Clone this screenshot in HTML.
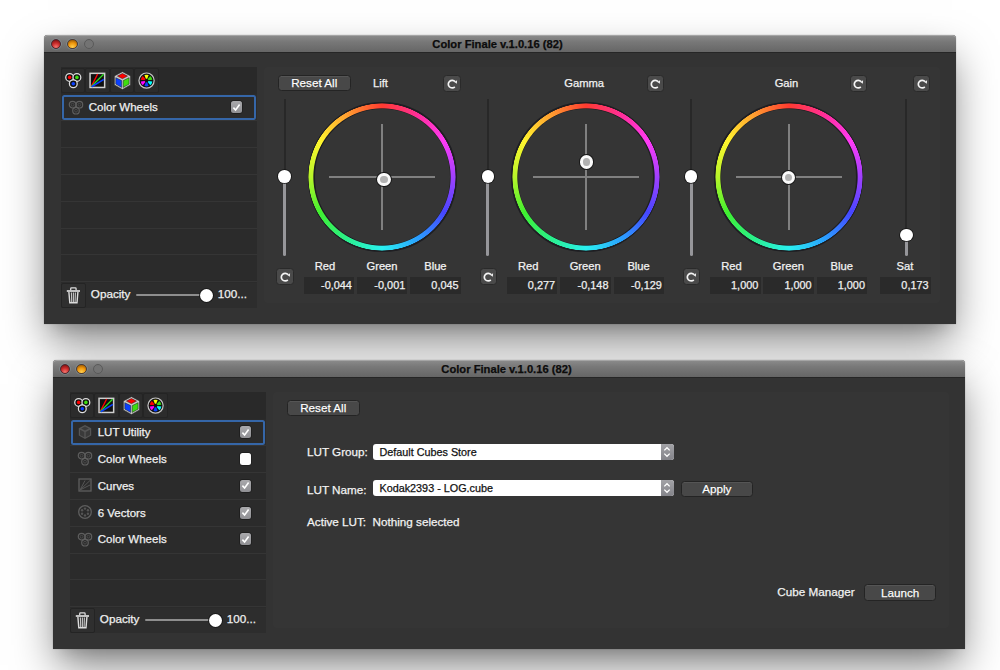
<!DOCTYPE html>
<html><head><meta charset="utf-8"><title>Color Finale</title>
<style>
html,body{margin:0;padding:0;background:#fff;}
body{width:1000px;height:670px;position:relative;overflow:hidden;font-family:"Liberation Sans",sans-serif;font-size:11px;color:#f0f0f0;-webkit-text-stroke:0.25px;}
.win{position:absolute;width:912px;height:289px;background:#333;border-radius:4px 4px 0 0;box-shadow:0 0 1px rgba(0,0,0,.5),0 20px 40px -4px rgba(0,0,0,.5),0 10px 14px -8px rgba(0,0,0,.13);}
.tbar{position:absolute;left:0;top:0;width:912px;height:18px;border-radius:4px 4px 0 0;background:linear-gradient(#8c8c8c,#787878 40%,#666);border-bottom:1px solid #262626;box-sizing:border-box;box-shadow:inset 0 1px 0 #a5a5a5;}
.tl{position:absolute;top:3.5px;width:10.6px;height:10.6px;border-radius:50%;box-sizing:border-box;}
.tl.r{left:6.6px;background:radial-gradient(circle at 50% 88%,#f57870,#cc2c2c 48%,#861414 85%);border:1px solid #4c2830;box-shadow:0 0 0 0.6px rgba(150,180,190,.55);}
.tl.y{left:23.05px;background:radial-gradient(circle at 50% 88%,#ffcf50,#f0980c 48%,#a05c04 85%);border:1px solid #4c3c38;box-shadow:0 0 0 0.6px rgba(150,180,190,.55);}
.tl.g{left:39.5px;background:#737373;border:1px solid #5a5a5a;}
.ttl{position:absolute;left:0;top:3px;width:907px;text-align:center;font-weight:bold;font-size:11.2px;line-height:13px;color:#0c0c0c;}
.lp{position:absolute;left:17px;top:32px;width:195.5px;height:241px;background:#2b2b2b;}
.tb{position:absolute;left:0;top:0;width:195.5px;height:27px;background:#292929;}
.tbb{position:absolute;top:0.5px;width:24.4px;height:25px;box-sizing:border-box;background:#2c2c2c;border:1px solid #242424;border-radius:2px;}
.tbb svg{position:absolute;left:-1px;top:-1px;}
.cb.on{background:linear-gradient(#a9a9ac,#909094);box-shadow:0 0 0 0.7px #1c1c1c;}
.cb.off{background:#fdfdfd;box-shadow:0 0 0 0.7px #1c1c1c;}
.cb svg{position:absolute;left:0.3px;top:0.6px;}
.bb{position:absolute;left:0;top:216px;width:195.5px;height:25px;background:#2d2d2d;}
.trash{position:absolute;left:0;top:0;width:24.5px;height:24.5px;box-sizing:border-box;border:1px solid #242424;background:#2f2f2f;border-radius:2px;}
.trash svg{position:absolute;left:-1px;top:-1px;}
.op{position:absolute;left:29.8px;top:4.2px;line-height:13px;font-size:11.7px;}
.htrk{position:absolute;left:74.5px;top:10.8px;width:68px;height:2.5px;background:#8e8e8e;border-radius:1.25px;}
.hthumb{position:absolute;left:139px;top:5.5px;width:13px;height:13px;border-radius:50%;background:#fff;box-shadow:0 0 0 0.8px #141414;}
.opv{position:absolute;left:156.8px;top:4.2px;line-height:13px;font-size:11.7px;}
.rp{position:absolute;left:219.5px;top:32px;width:676.5px;height:236px;background:#353535;border-radius:3px;}
.btn{position:absolute;height:16.4px;box-sizing:border-box;background:#484848;border:1px solid #242424;border-radius:3.5px;text-align:center;line-height:15.8px;font-size:11.7px;color:#fff;box-shadow:inset 0 1px 0 #555;text-shadow:0 0 1px rgba(0,0,0,.7);}
.lbl{position:absolute;line-height:13px;white-space:nowrap;font-size:11.7px;color:#f2f2f2;}
.rbtn{position:absolute;background:#4a4a4a;border-radius:3.5px;box-sizing:border-box;border:0.7px solid #2a2a2a;}
.rbtn svg{position:absolute;left:-0.4px;top:-0.1px;}
.vtrk{position:absolute;width:2.1px;background:#282828;}
.vtrk.lit{background:#96969a;width:3.2px;border-radius:0 0 1.5px 1.5px;}
.thumb{position:absolute;width:12.6px;height:12.6px;border-radius:50%;background:#fff;box-shadow:0 0 0 0.8px #141414;}
.wheel{position:absolute;width:148px;height:148px;border-radius:50%;background:conic-gradient(#ff3b30,#ff2e9a 30deg,#ff3bf5 60deg,#a040ff 90deg,#4646ff 120deg,#2aa0ff 150deg,#2af0f0 180deg,#2af08a 210deg,#40f030 240deg,#b8f52a 270deg,#fff52e 300deg,#ffa030 330deg,#ff3b30);-webkit-mask:radial-gradient(circle,transparent 68.2px,#000 69.1px,#000 73.2px,transparent 73.9px);mask:radial-gradient(circle,transparent 68.2px,#000 69.1px,#000 73.2px,transparent 73.9px);}
.chh{position:absolute;width:106.4px;height:2px;background:#808080;}
.chv{position:absolute;width:2px;height:106.4px;background:#808080;}
.knob{position:absolute;width:13.4px;height:13.4px;border-radius:50%;box-sizing:border-box;background:#b2b2b2;border:3px solid #fafafa;box-shadow:0 0 0 0.9px #161616;}
.fld{position:absolute;height:17px;box-sizing:border-box;background:#2a2a2a;text-align:right;padding-right:2.2px;line-height:16px;font-size:10.9px;color:#f0f0f0;}
.dd{position:absolute;height:16px;box-sizing:border-box;background:#fff;border-radius:3px;color:#111;font-size:10.8px;line-height:16px;}
.dd span{position:absolute;left:7px;top:0;white-space:nowrap;}
.dd b{position:absolute;right:0;top:0;width:12.5px;height:16px;background:linear-gradient(#a2a2a6,#84848a);border-radius:0 3px 3px 0;box-sizing:border-box;}
.dd b svg{position:absolute;left:0.3px;top:0;}
.l1{font-size:11.2px;}
.row{position:absolute;left:0;width:195.5px;height:26.8px;}
.row.sel::after{content:"";position:absolute;left:0.5px;top:1.2px;width:194.5px;height:25px;box-sizing:border-box;border:2px solid #3566a8;border-radius:2.5px;}
.row .ri{position:absolute;left:6.2px;top:3.7px;}
.row .rn{position:absolute;left:27.7px;top:7.2px;line-height:13px;white-space:nowrap;font-size:11.5px;}
.cb{position:absolute;left:169.9px;top:7.3px;width:11.5px;height:12px;border-radius:2.5px;}
.wring{position:absolute;width:149.2px;height:149.2px;box-sizing:border-box;border-radius:50%;border:7px solid #1e1e22;}
.rowline{position:absolute;left:0;width:195.5px;height:1px;background:#353535;margin-top:-0.5px;}
</style></head>
<body>
<div class="win" style="left:44px;top:35px"><div class="tbar"><i class="tl r"></i><i class="tl y"></i><i class="tl g"></i><div class="ttl">Color Finale v.1.0.16 (82)</div></div><div class="lp"><div class="tb"><div class="tbb" style="left:0.0px"><svg width="25" height="25" viewBox="0 0 25 25"><g stroke="#e0e0e0" stroke-width="1.25" fill="#101010"><circle cx="8.65" cy="9.4" r="3.9"/><circle cx="15.9" cy="9.4" r="3.9"/><circle cx="12.3" cy="15.8" r="3.9"/></g><circle cx="8.65" cy="9.4" r="1.8" fill="#f00"/><circle cx="15.9" cy="9.4" r="1.8" fill="#3ddc10"/><circle cx="12.3" cy="15.8" r="1.8" fill="#0a40ff"/></svg></div><div class="tbb" style="left:24.4px"><svg width="25" height="25" viewBox="0 0 25 25"><rect x="5.05" y="5.35" width="14.6" height="14.1" fill="#101010" stroke="#cfcfcf" stroke-width="1.5"/><path d="M6.2 18.6 L12.6 6.1" stroke="#f00" stroke-width="1.25"/><path d="M6.2 18.6 L18.6 6.3" stroke="#2fe020" stroke-width="1.3"/><path d="M6.6 18.7 L18.9 11.4" stroke="#0a40ff" stroke-width="1.6"/></svg></div><div class="tbb" style="left:48.8px"><svg width="25" height="25" viewBox="0 0 25 25"><path d="M12.45 3.7 L20.5 7.9 L20.5 16.9 L12.45 21.5 L4.4 16.9 L4.4 7.9 Z" fill="#c9c9c9" stroke="#222" stroke-width="0.5"/><g stroke="#1a1a1a" stroke-width="0.5"><path d="M12.45 5.5 L17.5 8.1 L12.45 10.7 L7.4 8.1 Z" fill="#f00"/><path d="M5.8 9.7 L11.65 12.6 L11.65 19.4 L5.8 16.1 Z" fill="#0a40ff"/><path d="M19.1 9.7 L13.25 12.6 L13.25 19.4 L19.1 16.1 Z" fill="#3ddc10"/></g></svg></div><div class="tbb" style="left:73.2px"><svg width="25" height="25" viewBox="0 0 25 25"><circle cx="12.55" cy="12.6" r="7.6" fill="#101010" stroke="#c6c6c6" stroke-width="1.2"/><path d="M11.87 10.83 L10.44 7.09 A5.9 5.9 0 0 1 14.66 7.09 L13.23 10.83 Z" fill="#ff0"/><path d="M13.75 11.12 L16.26 8.01 A5.9 5.9 0 0 1 18.38 11.68 L14.43 12.30 Z" fill="#3ddc10"/><path d="M14.43 12.90 L18.38 13.52 A5.9 5.9 0 0 1 16.26 17.19 L13.75 14.08 Z" fill="#0ff"/><path d="M13.23 14.37 L14.66 18.11 A5.9 5.9 0 0 1 10.44 18.11 L11.87 14.37 Z" fill="#0a40ff"/><path d="M11.35 14.08 L8.84 17.19 A5.9 5.9 0 0 1 6.72 13.52 L10.67 12.90 Z" fill="#f0f"/><path d="M10.67 12.30 L6.72 11.68 A5.9 5.9 0 0 1 8.84 8.01 L11.35 11.12 Z" fill="#f00"/></svg></div></div><div class="rowline" style="top:53.8px"></div><div class="rowline" style="top:80.6px"></div><div class="rowline" style="top:107.4px"></div><div class="rowline" style="top:134.2px"></div><div class="rowline" style="top:161.0px"></div><div class="rowline" style="top:187.8px"></div><div class="rowline" style="top:214.6px"></div><div class="row sel" style="top:27.0px"><span class="ri"><svg width="18" height="18" viewBox="0 0 18 18"><g stroke="#5e5e5e" stroke-width="1.2" fill="none"><circle cx="5.6" cy="6.7" r="3.3"/><circle cx="12.4" cy="6.7" r="3.3"/><circle cx="9" cy="12.7" r="3.3"/><g stroke="#4c4c4c" stroke-width="0.9"><circle cx="5.6" cy="6.7" r="1.4"/><circle cx="12.4" cy="6.7" r="1.4"/><circle cx="9" cy="12.7" r="1.4"/></g></g></svg></span><span class="rn">Color Wheels</span><div class="cb on"><svg width="11" height="11" viewBox="0 0 11 11"><path d="M2.4 5.6 L4.6 8 L8.6 2.6" fill="none" stroke="#fff" stroke-width="1.6"/></svg></div></div><div class="bb"><div class="trash"><svg width="25" height="25" viewBox="0 0 25 25"><g fill="none" stroke="#dcdcdc"><path d="M5.8 8 H19" stroke-width="1.7"/><path d="M9.7 7.2 V5.7 Q9.7 4.9 10.5 4.9 H14.3 Q15.1 4.9 15.1 5.7 V7.2" stroke-width="1.3"/><path d="M7.9 9 L8.8 19.7 H16 L16.9 9" stroke-width="1.4"/><path d="M10.4 9.4 L10.7 19 M12.4 9.4 V19 M14.4 9.4 L14.1 19" stroke-width="1.1" stroke="#c4c4c4"/></g></svg></div><div class="op">Opacity</div><div class="htrk"></div><div class="hthumb"></div><div class="opv">100...</div></div></div><div class="rp"><div class="btn" style="left:14.3px;top:7.7px;width:72.8px;line-height:14.2px">Reset All</div><div class="vtrk" style="left:20.10px;top:31.5px;height:78.50px"></div><div class="vtrk lit" style="left:19.60px;top:110.00px;height:79.00px"></div><div class="thumb" style="left:14.90px;top:103.10px"></div><div class="lbl l1" style="left:67.0px;top:9.6px;width:100px;text-align:center">Lift</div><div class="rbtn" style="left:179.90px;top:8.2px;width:17.6px;height:16.6px"><svg width="17" height="16" viewBox="0 0 17 16"><path d="M11.0 5.65 A3.8 3.8 0 1 0 10.8 10.8" fill="none" stroke="#f4f4f4" stroke-width="1.7"/><path d="M13.1 4.2 L10.3 5.9 L12.8 7.7 Z" fill="#f4f4f4"/></svg></div><div class="wring" style="left:44.10px;top:35.45px"></div><div class="wheel" style="left:44.70px;top:36.05px"></div><div class="chh" style="left:65.50px;top:109.05px"></div><div class="chv" style="left:117.70px;top:56.85px"></div><div class="knob" style="left:113.70px;top:105.90px"></div><div class="rbtn" style="left:12.90px;top:201.2px;width:17.6px;height:16.6px"><svg width="17" height="16" viewBox="0 0 17 16"><path d="M11.0 5.65 A3.8 3.8 0 1 0 10.8 10.8" fill="none" stroke="#f4f4f4" stroke-width="1.7"/><path d="M13.1 4.2 L10.3 5.9 L12.8 7.7 Z" fill="#f4f4f4"/></svg></div><div class="lbl l1" style="left:11.5px;top:192.5px;width:100px;text-align:center">Red</div><div class="fld" style="left:40.1px;top:210px;width:50.5px">-0,044</div><div class="lbl l1" style="left:68.5px;top:192.5px;width:100px;text-align:center">Green</div><div class="fld" style="left:93.45px;top:210px;width:50.5px">-0,001</div><div class="lbl l1" style="left:121.9px;top:192.5px;width:100px;text-align:center">Blue</div><div class="fld" style="left:146.8px;top:210px;width:50.5px">0,045</div><div class="vtrk" style="left:223.30px;top:31.5px;height:78.50px"></div><div class="vtrk lit" style="left:222.80px;top:110.00px;height:79.00px"></div><div class="thumb" style="left:218.10px;top:103.10px"></div><div class="lbl l1" style="left:270.7px;top:9.6px;width:100px;text-align:center">Gamma</div><div class="rbtn" style="left:383.10px;top:8.2px;width:17.6px;height:16.6px"><svg width="17" height="16" viewBox="0 0 17 16"><path d="M11.0 5.65 A3.8 3.8 0 1 0 10.8 10.8" fill="none" stroke="#f4f4f4" stroke-width="1.7"/><path d="M13.1 4.2 L10.3 5.9 L12.8 7.7 Z" fill="#f4f4f4"/></svg></div><div class="wring" style="left:247.60px;top:35.45px"></div><div class="wheel" style="left:248.20px;top:36.05px"></div><div class="chh" style="left:269.00px;top:109.05px"></div><div class="chv" style="left:321.20px;top:56.85px"></div><div class="knob" style="left:316.25px;top:88.45px"></div><div class="rbtn" style="left:216.10px;top:201.2px;width:17.6px;height:16.6px"><svg width="17" height="16" viewBox="0 0 17 16"><path d="M11.0 5.65 A3.8 3.8 0 1 0 10.8 10.8" fill="none" stroke="#f4f4f4" stroke-width="1.7"/><path d="M13.1 4.2 L10.3 5.9 L12.8 7.7 Z" fill="#f4f4f4"/></svg></div><div class="lbl l1" style="left:214.7px;top:192.5px;width:100px;text-align:center">Red</div><div class="fld" style="left:243.3px;top:210px;width:50.5px">0,277</div><div class="lbl l1" style="left:271.7px;top:192.5px;width:100px;text-align:center">Green</div><div class="fld" style="left:296.65px;top:210px;width:50.5px">-0,148</div><div class="lbl l1" style="left:325.1px;top:192.5px;width:100px;text-align:center">Blue</div><div class="fld" style="left:350.0px;top:210px;width:50.5px">-0,129</div><div class="vtrk" style="left:426.50px;top:31.5px;height:78.50px"></div><div class="vtrk lit" style="left:426.00px;top:110.00px;height:79.00px"></div><div class="thumb" style="left:421.30px;top:103.10px"></div><div class="lbl l1" style="left:473.0px;top:9.6px;width:100px;text-align:center">Gain</div><div class="rbtn" style="left:586.30px;top:8.2px;width:17.6px;height:16.6px"><svg width="17" height="16" viewBox="0 0 17 16"><path d="M11.0 5.65 A3.8 3.8 0 1 0 10.8 10.8" fill="none" stroke="#f4f4f4" stroke-width="1.7"/><path d="M13.1 4.2 L10.3 5.9 L12.8 7.7 Z" fill="#f4f4f4"/></svg></div><div class="wring" style="left:450.80px;top:35.45px"></div><div class="wheel" style="left:451.40px;top:36.05px"></div><div class="chh" style="left:472.20px;top:109.05px"></div><div class="chv" style="left:524.40px;top:56.85px"></div><div class="knob" style="left:518.50px;top:103.50px"></div><div class="rbtn" style="left:419.30px;top:201.2px;width:17.6px;height:16.6px"><svg width="17" height="16" viewBox="0 0 17 16"><path d="M11.0 5.65 A3.8 3.8 0 1 0 10.8 10.8" fill="none" stroke="#f4f4f4" stroke-width="1.7"/><path d="M13.1 4.2 L10.3 5.9 L12.8 7.7 Z" fill="#f4f4f4"/></svg></div><div class="lbl l1" style="left:417.9px;top:192.5px;width:100px;text-align:center">Red</div><div class="fld" style="left:446.5px;top:210px;width:50.5px">1,000</div><div class="lbl l1" style="left:474.9px;top:192.5px;width:100px;text-align:center">Green</div><div class="fld" style="left:499.85px;top:210px;width:50.5px">1,000</div><div class="lbl l1" style="left:528.3px;top:192.5px;width:100px;text-align:center">Blue</div><div class="fld" style="left:553.2px;top:210px;width:50.5px">1,000</div><div class="vtrk" style="left:641.70px;top:31.5px;height:137.10px"></div><div class="vtrk lit" style="left:641.20px;top:168.60px;height:20.40px"></div><div class="thumb" style="left:636.50px;top:161.70px"></div><div class="rbtn" style="left:649.40px;top:8.2px;width:17.6px;height:16.6px"><svg width="17" height="16" viewBox="0 0 17 16"><path d="M11.0 5.65 A3.8 3.8 0 1 0 10.8 10.8" fill="none" stroke="#f4f4f4" stroke-width="1.7"/><path d="M13.1 4.2 L10.3 5.9 L12.8 7.7 Z" fill="#f4f4f4"/></svg></div><div class="lbl l1" style="left:591.5px;top:192.5px;width:100px;text-align:center">Sat</div><div class="fld" style="left:616.8px;top:210px;width:50.5px">0,173</div></div></div>
<div class="win" style="left:53px;top:360px"><div class="tbar"><i class="tl r"></i><i class="tl y"></i><i class="tl g"></i><div class="ttl">Color Finale v.1.0.16 (82)</div></div><div class="lp"><div class="tb"><div class="tbb" style="left:0.0px"><svg width="25" height="25" viewBox="0 0 25 25"><g stroke="#e0e0e0" stroke-width="1.25" fill="#101010"><circle cx="8.65" cy="9.4" r="3.9"/><circle cx="15.9" cy="9.4" r="3.9"/><circle cx="12.3" cy="15.8" r="3.9"/></g><circle cx="8.65" cy="9.4" r="1.8" fill="#f00"/><circle cx="15.9" cy="9.4" r="1.8" fill="#3ddc10"/><circle cx="12.3" cy="15.8" r="1.8" fill="#0a40ff"/></svg></div><div class="tbb" style="left:24.4px"><svg width="25" height="25" viewBox="0 0 25 25"><rect x="5.05" y="5.35" width="14.6" height="14.1" fill="#101010" stroke="#cfcfcf" stroke-width="1.5"/><path d="M6.2 18.6 L12.6 6.1" stroke="#f00" stroke-width="1.25"/><path d="M6.2 18.6 L18.6 6.3" stroke="#2fe020" stroke-width="1.3"/><path d="M6.6 18.7 L18.9 11.4" stroke="#0a40ff" stroke-width="1.6"/></svg></div><div class="tbb" style="left:48.8px"><svg width="25" height="25" viewBox="0 0 25 25"><path d="M12.45 3.7 L20.5 7.9 L20.5 16.9 L12.45 21.5 L4.4 16.9 L4.4 7.9 Z" fill="#c9c9c9" stroke="#222" stroke-width="0.5"/><g stroke="#1a1a1a" stroke-width="0.5"><path d="M12.45 5.5 L17.5 8.1 L12.45 10.7 L7.4 8.1 Z" fill="#f00"/><path d="M5.8 9.7 L11.65 12.6 L11.65 19.4 L5.8 16.1 Z" fill="#0a40ff"/><path d="M19.1 9.7 L13.25 12.6 L13.25 19.4 L19.1 16.1 Z" fill="#3ddc10"/></g></svg></div><div class="tbb" style="left:73.2px"><svg width="25" height="25" viewBox="0 0 25 25"><circle cx="12.55" cy="12.6" r="7.6" fill="#101010" stroke="#c6c6c6" stroke-width="1.2"/><path d="M11.87 10.83 L10.44 7.09 A5.9 5.9 0 0 1 14.66 7.09 L13.23 10.83 Z" fill="#ff0"/><path d="M13.75 11.12 L16.26 8.01 A5.9 5.9 0 0 1 18.38 11.68 L14.43 12.30 Z" fill="#3ddc10"/><path d="M14.43 12.90 L18.38 13.52 A5.9 5.9 0 0 1 16.26 17.19 L13.75 14.08 Z" fill="#0ff"/><path d="M13.23 14.37 L14.66 18.11 A5.9 5.9 0 0 1 10.44 18.11 L11.87 14.37 Z" fill="#0a40ff"/><path d="M11.35 14.08 L8.84 17.19 A5.9 5.9 0 0 1 6.72 13.52 L10.67 12.90 Z" fill="#f0f"/><path d="M10.67 12.30 L6.72 11.68 A5.9 5.9 0 0 1 8.84 8.01 L11.35 11.12 Z" fill="#f00"/></svg></div></div><div class="rowline" style="top:53.8px"></div><div class="rowline" style="top:80.6px"></div><div class="rowline" style="top:107.4px"></div><div class="rowline" style="top:134.2px"></div><div class="rowline" style="top:161.0px"></div><div class="rowline" style="top:187.8px"></div><div class="rowline" style="top:214.6px"></div><div class="row sel" style="top:27.0px"><span class="ri"><svg width="18" height="18" viewBox="0 0 18 18"><path d="M9 2 L15.2 5.2 L15.2 12.6 L9 16 L2.8 12.6 L2.8 5.2 Z" fill="#555"/><path d="M9 3.4 L12.9 5.4 L9 7.4 L5.1 5.4 Z M4 6.8 L8.3 9 L8.3 14.2 L4 11.9 Z M14 6.8 L9.7 9 L9.7 14.2 L14 11.9 Z" fill="#3a3a3a"/></svg></span><span class="rn">LUT Utility</span><div class="cb on"><svg width="11" height="11" viewBox="0 0 11 11"><path d="M2.4 5.6 L4.6 8 L8.6 2.6" fill="none" stroke="#fff" stroke-width="1.6"/></svg></div></div><div class="row" style="top:53.8px"><span class="ri"><svg width="18" height="18" viewBox="0 0 18 18"><g stroke="#5e5e5e" stroke-width="1.2" fill="none"><circle cx="5.6" cy="6.7" r="3.3"/><circle cx="12.4" cy="6.7" r="3.3"/><circle cx="9" cy="12.7" r="3.3"/><g stroke="#4c4c4c" stroke-width="0.9"><circle cx="5.6" cy="6.7" r="1.4"/><circle cx="12.4" cy="6.7" r="1.4"/><circle cx="9" cy="12.7" r="1.4"/></g></g></svg></span><span class="rn">Color Wheels</span><div class="cb off"></div></div><div class="row" style="top:80.6px"><span class="ri"><svg width="18" height="18" viewBox="0 0 18 18"><rect x="3" y="3" width="12" height="12" fill="none" stroke="#5e5e5e" stroke-width="1.3"/><path d="M4 14 L9 4.5 M4 14 L14 4.5 M4 14 L14 9" stroke="#555" stroke-width="1"/></svg></span><span class="rn">Curves</span><div class="cb on"><svg width="11" height="11" viewBox="0 0 11 11"><path d="M2.4 5.6 L4.6 8 L8.6 2.6" fill="none" stroke="#fff" stroke-width="1.6"/></svg></div></div><div class="row" style="top:107.4px"><span class="ri"><svg width="18" height="18" viewBox="0 0 18 18"><circle cx="9" cy="9" r="6.3" fill="none" stroke="#5e5e5e" stroke-width="1.3"/><circle cx="9.00" cy="5.60" r="1.2" fill="#555"/><circle cx="11.94" cy="7.30" r="1.2" fill="#555"/><circle cx="11.94" cy="10.70" r="1.2" fill="#555"/><circle cx="9.00" cy="12.40" r="1.2" fill="#555"/><circle cx="6.06" cy="10.70" r="1.2" fill="#555"/><circle cx="6.06" cy="7.30" r="1.2" fill="#555"/></svg></span><span class="rn">6 Vectors</span><div class="cb on"><svg width="11" height="11" viewBox="0 0 11 11"><path d="M2.4 5.6 L4.6 8 L8.6 2.6" fill="none" stroke="#fff" stroke-width="1.6"/></svg></div></div><div class="row" style="top:134.2px"><span class="ri"><svg width="18" height="18" viewBox="0 0 18 18"><g stroke="#5e5e5e" stroke-width="1.2" fill="none"><circle cx="5.6" cy="6.7" r="3.3"/><circle cx="12.4" cy="6.7" r="3.3"/><circle cx="9" cy="12.7" r="3.3"/><g stroke="#4c4c4c" stroke-width="0.9"><circle cx="5.6" cy="6.7" r="1.4"/><circle cx="12.4" cy="6.7" r="1.4"/><circle cx="9" cy="12.7" r="1.4"/></g></g></svg></span><span class="rn">Color Wheels</span><div class="cb on"><svg width="11" height="11" viewBox="0 0 11 11"><path d="M2.4 5.6 L4.6 8 L8.6 2.6" fill="none" stroke="#fff" stroke-width="1.6"/></svg></div></div><div class="bb"><div class="trash"><svg width="25" height="25" viewBox="0 0 25 25"><g fill="none" stroke="#dcdcdc"><path d="M5.8 8 H19" stroke-width="1.7"/><path d="M9.7 7.2 V5.7 Q9.7 4.9 10.5 4.9 H14.3 Q15.1 4.9 15.1 5.7 V7.2" stroke-width="1.3"/><path d="M7.9 9 L8.8 19.7 H16 L16.9 9" stroke-width="1.4"/><path d="M10.4 9.4 L10.7 19 M12.4 9.4 V19 M14.4 9.4 L14.1 19" stroke-width="1.1" stroke="#c4c4c4"/></g></svg></div><div class="op">Opacity</div><div class="htrk"></div><div class="hthumb"></div><div class="opv">100...</div></div></div><div class="rp"><div class="btn" style="left:14.3px;top:7.6px;width:72.8px;line-height:14.2px">Reset All</div><div class="lbl" style="left:34.5px;top:52.5px">LUT Group:</div><div class="dd" style="left:100.0px;top:51.5px;width:301px"><span>Default Cubes Store</span><b><svg width="12" height="16" viewBox="0 0 12 16"><path d="M3.3 6.4 L6 3.7 L8.7 6.4 M3.3 9.6 L6 12.3 L8.7 9.6" fill="none" stroke="#fff" stroke-width="1.3"/></svg></b></div><div class="lbl" style="left:34.5px;top:90.8px">LUT Name:</div><div class="dd" style="left:100.0px;top:88px;width:301px"><span>Kodak2393 - LOG.cube</span><b><svg width="12" height="16" viewBox="0 0 12 16"><path d="M3.3 6.4 L6 3.7 L8.7 6.4 M3.3 9.6 L6 12.3 L8.7 9.6" fill="none" stroke="#fff" stroke-width="1.3"/></svg></b></div><div class="btn" style="left:408.5px;top:88.5px;width:71.5px;line-height:14.2px">Apply</div><div class="lbl" style="left:34.5px;top:122.5px">Active LUT:</div><div class="lbl" style="left:100.0px;top:122.5px">Nothing selected</div><div class="lbl" style="left:504.8px;top:193px">Cube Manager</div><div class="btn" style="left:591.5px;top:192.4px;width:72.4px">Launch</div></div></div>
</body></html>
